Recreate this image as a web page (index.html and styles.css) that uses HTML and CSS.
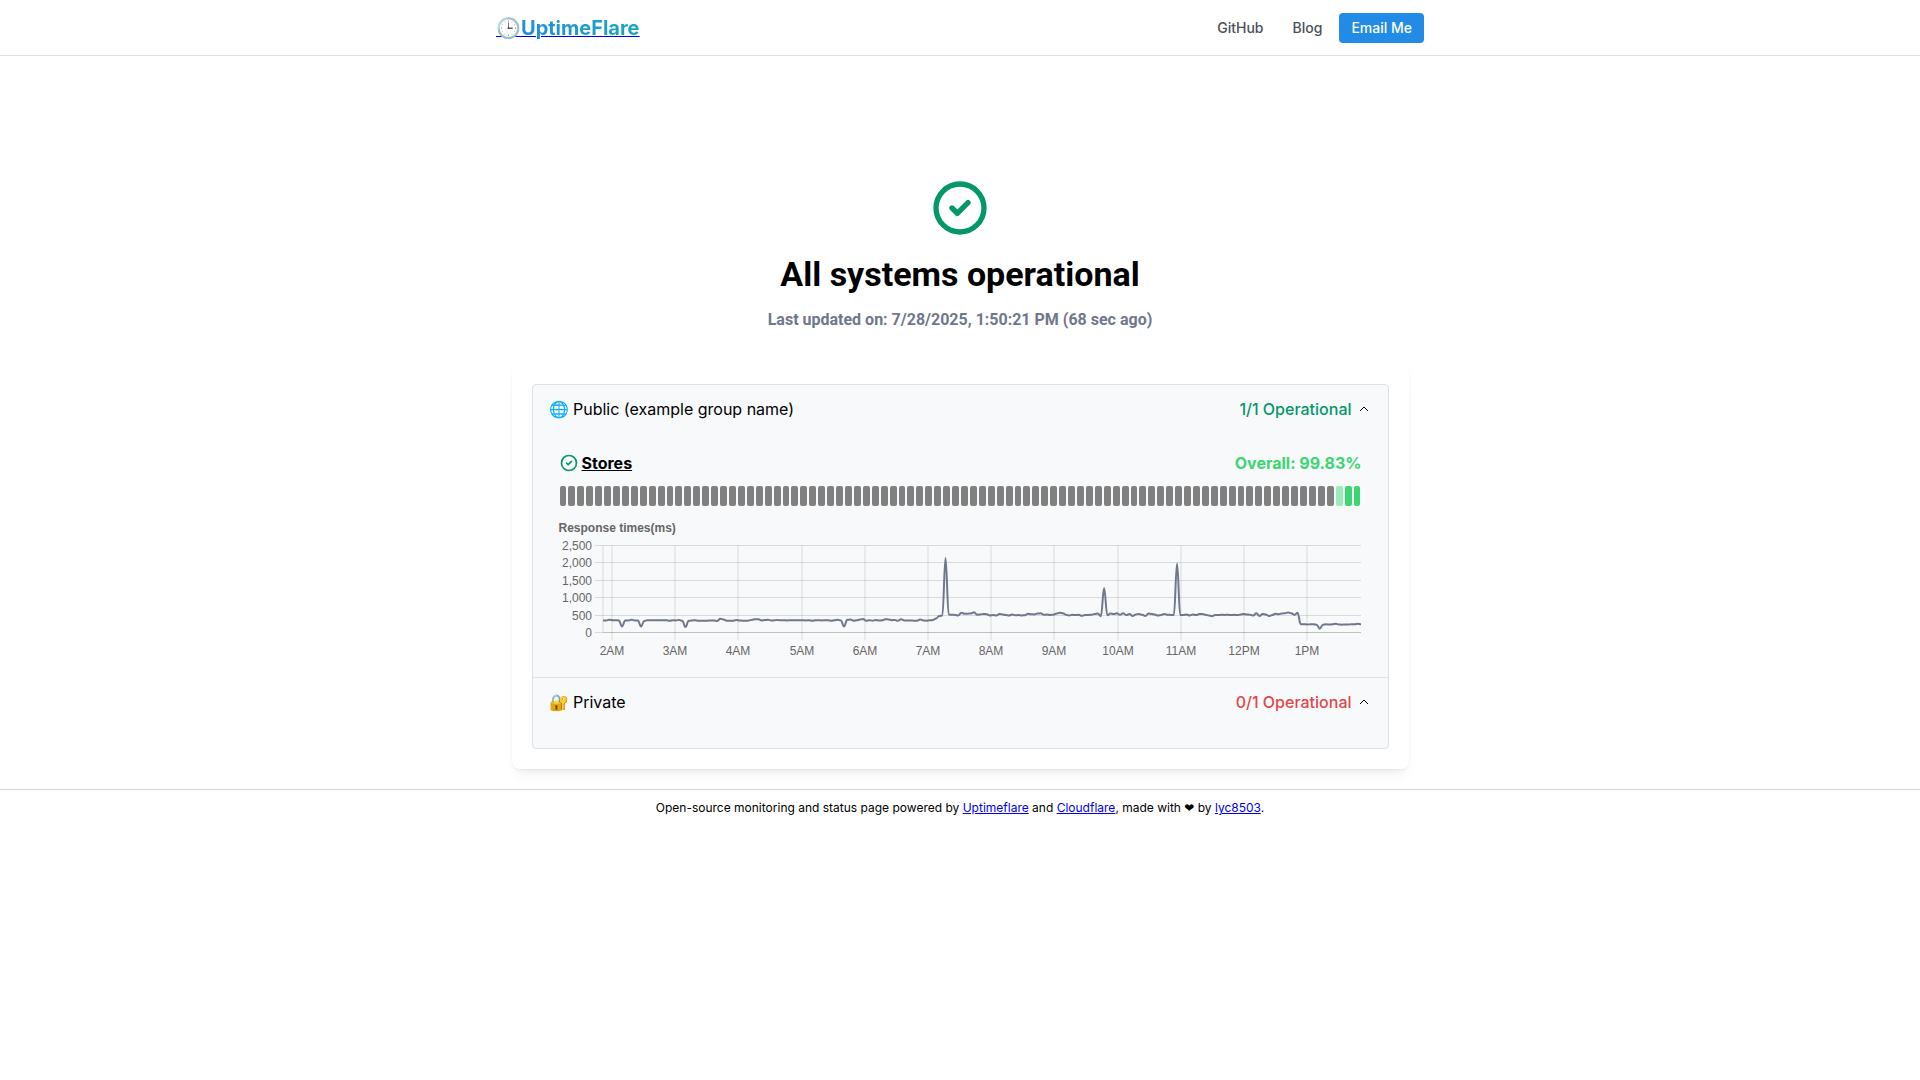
FILE: index.html
```html
<!DOCTYPE html>
<html lang="en">

<head>
  <meta charset="utf-8">
  <title>UptimeFlare</title>
  <link rel="stylesheet" href="styles.css">
</head>

<body>
  <header class="header">
    <div class="header-inner">
      <a class="logo" href="#">🕒<span class="logo-text">UptimeFlare</span></a>
      <nav class="nav">
        <a class="nav-link" href="#">GitHub</a>
        <a class="nav-link" href="#">Blog</a>
        <a class="nav-link active" href="#">Email Me</a>
      </nav>
    </div>
  </header>

  <main>
    <section class="overall">
      <svg class="status-icon" viewBox="0 0 24 24" width="64" height="64">
        <circle cx="12" cy="12" r="9" />
        <path d="M9 12l2 2l4 -4" />
      </svg>
      <h1>All systems operational</h1>
      <p>Last updated on: 7/28/2025, 1:50:21 PM (68 sec ago)</p>
    </section>

    <div class="card">
      <div class="accordion">
        <section class="group">
          <button class="group-control" type="button" aria-expanded="true">
            <span>🌐 Public (example group name)</span>
            <span class="group-count up">1/1 Operational</span>
            <svg class="chevron" viewBox="0 0 16 16" width="16" height="16">
              <path d="M4 10L8 6L12 10" />
            </svg>
          </button>
          <div class="group-panel">
            <div class="monitor">
              <div class="monitor-head">
                <svg class="status-icon" viewBox="0 0 24 24" width="20" height="20">
                  <circle cx="12" cy="12" r="9" />
                  <path d="M9 12l2 2l4 -4" />
                </svg>
                <a class="monitor-name" href="#">Stores</a>
                <span class="monitor-overall">Overall: 99.83%</span>
              </div>
              <div id="days" class="days"></div>
              <h2 class="chart-title">Response times(ms)</h2>
              <svg id="chart" class="chart" viewBox="0 0 803 124"></svg>
            </div>
          </div>
        </section>

        <section class="group">
          <button class="group-control" type="button" aria-expanded="true">
            <span>🔐 Private</span>
            <span class="group-count down">0/1 Operational</span>
            <svg class="chevron" viewBox="0 0 16 16" width="16" height="16">
              <path d="M4 10L8 6L12 10" />
            </svg>
          </button>
          <div class="group-panel"></div>
        </section>
      </div>
    </div>
  </main>

  <footer class="footer">
    Open-source monitoring and status page powered by <a href="#">Uptimeflare</a> and
    <a href="#">Cloudflare</a>, made with <span class="heart">❤</span> by <a href="#">lyc8503</a>.
  </footer>

  <script src="script.js"></script>
</body>

</html>
```
FILE: styles.css
```css
* {
  box-sizing: border-box;
}

body {
  margin: 0;
  background-color: #fff;
  color: #000;
  font-family: Inter, "Liberation Sans", sans-serif;
  font-size: 16px;
}

/* --- Header --- */
.header {
  border-bottom: 1px solid #dee2e6;
}

.header-inner {
  display: flex;
  align-items: center;
  justify-content: space-between;
  max-width: 960px;
  height: 55px;
  margin: 0 auto;
  padding: 0 16px;
}

.logo {
  color: #0000ee;
  font-size: 20px;
  font-weight: 700;
  text-decoration-thickness: 1px;
}

.logo-text {
  background: linear-gradient(45deg, #228be6, #15aabf);
  background-clip: text;
  -webkit-background-clip: text;
  -webkit-text-fill-color: transparent;
}

.nav {
  display: flex;
  gap: 5px;
}

.nav-link {
  padding: 8px 12px;
  border-radius: 4px;
  color: #495057;
  font-size: 14px;
  font-weight: 500;
  line-height: 14px;
  text-decoration: none;
}

.nav-link.active {
  background-color: #228be6;
  color: #fff;
}

/* --- Overall status --- */
.overall {
  padding-top: 120px;
  font-family: Roboto, sans-serif;
  text-align: center;
}

.overall .status-icon {
  display: block;
  margin: 0 auto;
}

.overall h1 {
  margin: 12px 0;
  font-size: 34px;
  font-weight: 700;
  line-height: 44px;
}

.overall p {
  margin: 0;
  color: #70778c;
  font-weight: 700;
  line-height: 24px;
}

.status-icon {
  fill: none;
  stroke: #059669;
  stroke-width: 2;
  stroke-linecap: round;
  stroke-linejoin: round;
}

/* --- Monitor card --- */
.card {
  max-width: 897px;
  margin: 32px auto 20px;
  padding: 20px;
  border-radius: 8px;
  background-color: #fff;
  box-shadow: 0 1px 3px rgba(0, 0, 0, 0.05), 0 10px 15px -5px rgba(0, 0, 0, 0.05), 0 7px 7px -5px rgba(0, 0, 0, 0.04);
}

.accordion {
  border: 1px solid #dee2e6;
  border-radius: 4px;
  background-color: #f8f9fb;
}

.group + .group {
  border-top: 1px solid #dee2e6;
}

.group-control {
  display: flex;
  align-items: center;
  width: 100%;
  padding: 14px 16px 16px;
  border: none;
  background: none;
  color: #000;
  font: inherit;
  line-height: 20px;
  cursor: pointer;
}

.group-count {
  margin-left: auto;
  font-weight: 500;
}

.up {
  color: #059669;
}

.down {
  color: #df484a;
}

.chevron {
  margin-left: 4px;
  fill: none;
  stroke: #000;
}

.group-panel {
  padding: 4px 16px 16px;
}

.monitor {
  padding: 12px 10px 0;
}

.monitor-head {
  display: flex;
  align-items: center;
  height: 24px;
  font-weight: 700;
}

.monitor-name {
  margin-left: 3px;
  color: #000;
}

.monitor-overall {
  margin-left: auto;
  color: #3bd671;
}

.days {
  display: flex;
  gap: 2px;
  height: 20px;
  margin: 11px 1px 0;
}

.day {
  flex: 1;
  border-radius: 2px;
  background-color: gray;
}

.day.partial {
  background-color: #9deab8;
}

.day.ok {
  background-color: #3bd671;
}

/* --- Response time chart --- */
.chart-title {
  margin: 14px 0 0;
  color: #666;
  font-family: "Liberation Sans", Arial, sans-serif;
  font-size: 12px;
  line-height: 16px;
}

.chart {
  display: block;
  width: 100%;
  margin-top: 1px;
  overflow: visible;
}

.chart text {
  fill: #666;
  font-family: "Liberation Sans", Arial, sans-serif;
  font-size: 12px;
}

.grid-line {
  stroke: rgba(0, 0, 0, 0.12);
}

.series {
  fill: none;
  stroke: #70778c;
  stroke-width: 2;
  stroke-linejoin: round;
}

/* --- Footer --- */
.footer {
  padding: 10px 0;
  border-top: 1px solid #ced4da;
  font-size: 12px;
  line-height: 16px;
  text-align: center;
}

.footer a {
  color: #0000ee;
}

.heart {
  font-family: "DejaVu Sans", sans-serif;
}
```
FILE: script.js
```js
const times = [
  345, 345, 365, 355, 355, 345, 170, 345, 345, 365, 345, 345, 170, 330, 350, 350, 350, 350, 350, 350,
  350, 338, 350, 348, 362, 335, 155, 335, 345, 355, 338, 335, 335, 338, 345, 345, 330, 395, 375, 340,
  338, 335, 362, 345, 340, 335, 345, 365, 378, 380, 345, 360, 365, 345, 350, 362, 350, 355, 348, 350,
  350, 355, 355, 350, 348, 352, 338, 355, 350, 348, 350, 350, 335, 350, 365, 345, 170, 365, 370, 340,
  350, 370, 385, 335, 355, 340, 360, 345, 350, 380, 375, 355, 360, 335, 380, 345, 345, 345, 338, 340,
  375, 345, 340, 350, 360, 400, 475, 490, 2144, 515, 510, 505, 490, 565, 540, 540, 545, 580, 510, 520,
  535, 525, 490, 500, 490, 535, 520, 500, 490, 515, 495, 500, 490, 495, 540, 525, 520, 545, 550, 510,
  515, 505, 510, 545, 570, 550, 510, 490, 510, 500, 510, 480, 505, 505, 510, 530, 545, 470, 1282, 495,
  545, 530, 550, 510, 555, 500, 530, 475, 520, 535, 510, 475, 545, 535, 515, 485, 505, 535, 510, 505,
  500, 1983, 505, 500, 515, 490, 520, 500, 530, 535, 510, 490, 470, 505, 500, 510, 505, 510, 500, 510,
  500, 515, 530, 520, 510, 485, 550, 475, 530, 520, 475, 500, 540, 525, 545, 555, 575, 555, 505, 565,
  240, 240, 232, 235, 235, 225, 110, 225, 235, 230, 235, 250, 230, 225, 228, 232, 235, 235, 248, 235
];
const hours = ["2AM", "3AM", "4AM", "5AM", "6AM", "7AM", "8AM", "9AM", "10AM", "11AM", "12PM", "1PM"];

const left = 44;
const right = 802;
const top0 = 8.5;
const bottom = 95.5;

function drawDays() {
  const days = document.getElementById("days");
  for (let i = 0; i < 90; i++) {
    const day = document.createElement("div");
    day.className = "day";
    if (i === 87) day.classList.add("partial");
    if (i > 87) day.classList.add("ok");
    days.appendChild(day);
  }
}

function line(x1, y1, x2, y2) {
  return `<line class="grid-line" x1="${x1}" y1="${y1}" x2="${x2}" y2="${y2}" />`;
}

function drawChart() {
  let svg = "";

  // y axis
  for (let v = 0; v <= 2500; v += 500) {
    const y = Math.round(bottom - (v / 2500) * (bottom - top0) - 0.5) + 0.5;
    svg += line(left - 8, y, right, y);
    svg += `<text x="${left - 11}" y="${y + 4}" text-anchor="end">${v.toLocaleString("en-US")}</text>`;
  }
  svg += line(left, bottom, right, bottom);

  // x axis
  svg += line(left, top0, left, bottom);
  hours.forEach((hour, i) => {
    const x = Math.round(53 + i * 63.2);
    svg += line(x, top0, x, bottom + 8);
    svg += `<text x="${x}" y="${bottom + 22}" text-anchor="middle">${hour}</text>`;
  });

  // smoothed line through all the samples
  const step = (right - left) / (times.length - 1);
  let d = "";
  times.forEach((t, i) => {
    const x = left + i * step;
    const y = (bottom - (t / 2500) * (bottom - top0)).toFixed(2);
    d += i === 0
      ? `M${x},${y}`
      : `S${(x - step * 0.4).toFixed(2)},${y} ${x.toFixed(2)},${y}`;
  });
  svg += `<path class="series" d="${d}" />`;

  document.getElementById("chart").innerHTML = svg;
}

drawDays();
drawChart();
```
